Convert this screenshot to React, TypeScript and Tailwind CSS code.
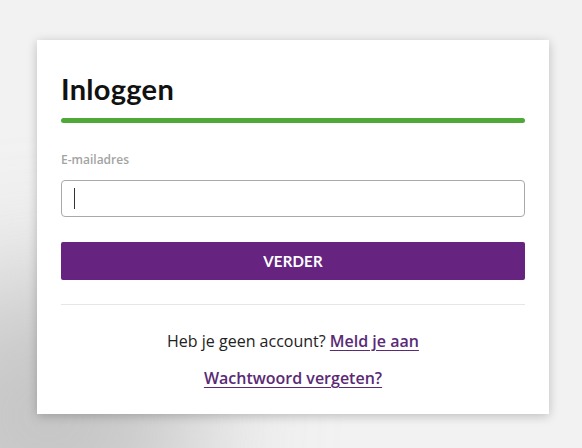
export default function App() {
  return (
    <div
      className="relative h-[448px] w-[582px] overflow-hidden bg-[#f2f2f2]"
      style={{ fontFamily: '"Open Sans", "Liberation Sans", sans-serif' }}
    >
      {/* soft darker shade in the lower left of the backdrop */}
      <div className="pointer-events-none absolute -bottom-28 -left-28 h-72 w-80 rounded-full bg-[#a8a8a8] opacity-60 blur-3xl" />

      <div className="relative ml-[37px] mt-[40px] w-[512px] bg-white px-6 pb-[25px] pt-[32px] shadow-[0_2px_10px_rgba(0,0,0,0.22)]">
        <h1 className="font-['Lato',sans-serif] text-[29px] font-bold leading-[34px] tracking-[0.3px] text-[#111]">
          Inloggen
        </h1>
        <div className="mt-[12px] h-[5px] rounded-full bg-[#4fa938]" />

        <label className="mt-[28px] block text-[12px] font-semibold leading-[18px] text-[#a3a3a3]">
          E-mailadres
        </label>
        <div className="mt-[11px] flex h-[37px] items-center rounded-[4px] border border-[#a9a9a9] px-3">
          <span className="h-[21px] w-px bg-[#333]" />
        </div>

        <button className="mt-[25px] flex h-[38px] w-full items-center justify-center rounded-[2px] bg-[#66237f] font-['Lato',sans-serif] text-[15px] font-bold tracking-[0.2px] text-white">
          VERDER
        </button>

        <div className="mt-[24px] h-px bg-[#e6e6e6]" />

        <p className="mt-[25px] text-center text-[16px] leading-[22px] text-[#222]">
          Heb je geen account?{' '}
          <a className="font-semibold text-[#5a2a75] underline underline-offset-[3px]">Meld je aan</a>
        </p>
        <p className="mt-[15px] text-center text-[16px] leading-[22px]">
          <a className="font-semibold text-[#5a2a75] underline underline-offset-[3px]">Wachtwoord vergeten?</a>
        </p>
      </div>
    </div>
  )
}
